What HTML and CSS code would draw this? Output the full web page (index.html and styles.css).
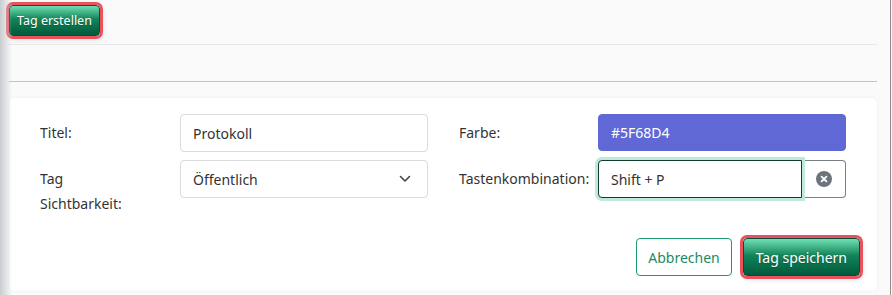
FILE: index.html
```html
<!DOCTYPE html>
<html>

<head>
    <title>Tag bearbeiten</title>
    <link rel="stylesheet" href="styles.css">
</head>

<body>
    <div class="page">
        <div class="toolbar">
            <button class="btn-primary btn-small highlight">Tag erstellen</button>
        </div>
        <div class="divider light"></div>
        <div class="divider dark"></div>

        <div class="card">
            <div class="form-grid">
                <label class="label">Titel:</label>
                <input type="text" class="field" value="Protokoll">

                <label class="label second">Farbe:</label>
                <input type="text" class="field color-field" value="#5F68D4">

                <label class="label">Tag<br>Sichtbarkeit:</label>
                <div class="field select">
                    <span>Öffentlich</span>
                    <svg width="12" height="8" viewBox="0 0 12 8">
                        <path d="M1.5 1.5 L6 6 L10.5 1.5" fill="none" stroke="#444" stroke-width="1.6" stroke-linecap="round" stroke-linejoin="round" />
                    </svg>
                </div>

                <label class="label second">Tastenkombination:</label>
                <div class="input-group">
                    <input type="text" class="field focused" value="Shift + P">
                    <button class="clear-btn">
                        <svg width="16" height="16" viewBox="0 0 16 16">
                            <circle cx="8" cy="8" r="8" fill="#6c757d" />
                            <path d="M5.6 5.6 L10.4 10.4 M10.4 5.6 L5.6 10.4" stroke="#fff" stroke-width="1.8" stroke-linecap="round" />
                        </svg>
                    </button>
                </div>
            </div>

            <div class="actions">
                <button class="btn-outline">Abbrechen</button>
                <button class="btn-primary highlight">Tag speichern</button>
            </div>
        </div>
    </div>
</body>

</html>
```

FILE: styles.css
```css
body,
html {
    margin: 0;
    padding: 0;
    height: 100%;
}

body {
    background: #fafafa;
    font-family: "Noto Sans", sans-serif;
    color: #333;
}

.page {
    position: relative;
    box-sizing: border-box;
    width: 891px;
    height: 295px;
    padding: 5px 13px 0 9px;
    border-right: 1px solid #8c8c8c;
}

/* schatten links */
.page::before {
    content: "";
    position: absolute;
    left: 0;
    top: 0;
    bottom: 0;
    width: 12px;
    background: linear-gradient(to right, #c9ccd0, rgba(250, 250, 250, 0));
}

.toolbar {
    height: 39px;
}

.divider {
    height: 1px;
}

.divider.light {
    background: #e8e8e8;
}

.divider.dark {
    margin-top: 36px;
    background: #c4c4c4;
}

button {
    font-family: inherit;
    cursor: pointer;
}

.btn-primary {
    color: #fff;
    border: 1px solid #0b4a33;
    border-radius: 4px;
    background: linear-gradient(to bottom, #6fe0b4 0%, #14845a 45%, #005a3b 100%);
    font-size: 14px;
    height: 38px;
    padding: 0 12px;
    text-shadow: 0 1px 1px rgba(0, 0, 0, 0.2);
}

.btn-small {
    font-size: 12.5px;
    height: 31px;
    padding: 0 7px;
}

.highlight {
    outline: 3px solid #e9525c;
    outline-offset: 0;
    box-shadow: 2px 3px 6px rgba(0, 0, 0, 0.15);
}

.btn-outline {
    color: #1b8a62;
    background: #fff;
    border: 1px solid #1b9a6c;
    border-radius: 4px;
    font-size: 14px;
    height: 38px;
    padding: 0 11px;
}

.card {
    margin-top: 16px;
    background: #fff;
    border-radius: 5px;
    box-shadow: 0 0 3px rgba(0, 0, 0, 0.06);
    padding: 16px 17px 14px 31px;
    height: 193px;
    box-sizing: border-box;
}

.form-grid {
    display: grid;
    grid-template-columns: 140px 248px 170px 248px;
    row-gap: 8px;
}

.label {
    font-size: 14px;
    line-height: 25px;
    padding-top: 6px;
}

.label.second {
    padding-left: 31px;
}

.field {
    box-sizing: border-box;
    height: 38px;
    border: 1px solid #dcdcdc;
    border-radius: 4px;
    padding: 0 12px;
    font-family: inherit;
    font-size: 14px;
    color: #333;
    background: #fff;
    width: 100%;
}

.color-field {
    background: #5f68d4;
    border-color: #5f68d4;
    color: #fff;
    height: 37px;
}

.select {
    display: flex;
    align-items: center;
    justify-content: space-between;
    padding-right: 16px;
}

.input-group {
    display: flex;
    height: 38px;
}

.input-group .field.focused {
    flex: 1;
    min-width: 0;
    border: 1px solid #143a2a;
    border-radius: 4px 0 0 4px;
    box-shadow: 0 0 0 3px #bfe9d8;
    outline: none;
    position: relative;
}

.clear-btn {
    flex: none;
    width: 44px;
    height: 38px;
    border: 1px solid #7a8087;
    border-left: none;
    border-radius: 0 4px 4px 0;
    background: #fff;
    display: flex;
    align-items: center;
    justify-content: center;
    padding: 0;
}

.actions {
    display: flex;
    justify-content: flex-end;
    gap: 11px;
    margin-top: 22px;
}
```
